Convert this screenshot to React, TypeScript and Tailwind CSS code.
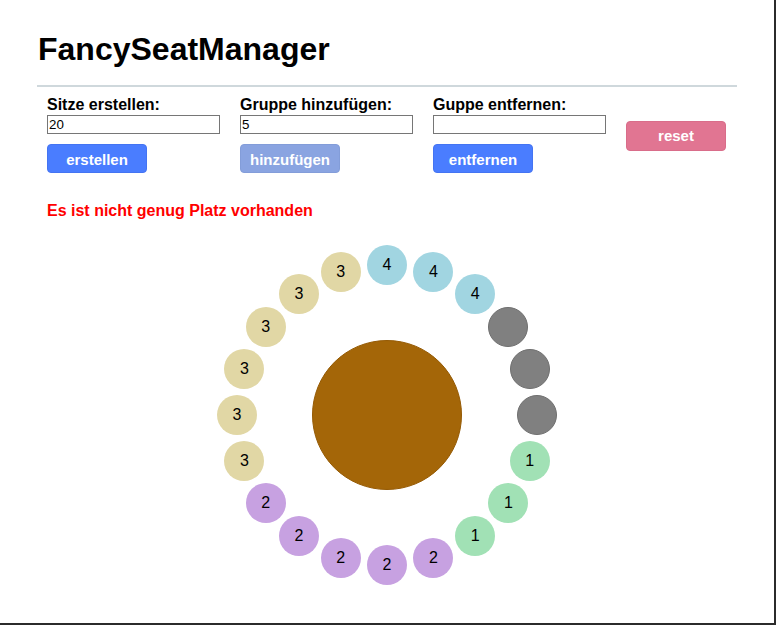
import React from 'react';

type Seat = { group: number | null };

// seats clockwise, starting at the top
const seatGroups: (number | null)[] = [4, 4, 4, null, null, null, 1, 1, 1, 2, 2, 2, 2, 2, 3, 3, 3, 3, 3, 3];

const seatColor = (g: number | null) => {
  switch (g) {
    case 1: return 'bg-[#a1e1b5]';
    case 2: return 'bg-[#c7a1e1]';
    case 3: return 'bg-[#e1d7a5]';
    case 4: return 'bg-[#a1d5e1]';
    default: return 'bg-[#808080] border border-[#6f6f6f]';
  }
};

const Field: React.FC<{ label: string; value: string; button: string; muted?: boolean }> = ({ label, value, button, muted }) => (
  <div className="flex flex-col w-[193px]">
    <label className="text-[16px] font-bold leading-[18px] text-black">{label}</label>
    <input
      defaultValue={value}
      className="mt-[1px] h-[19px] w-[173px] border border-[#767676] bg-white px-[1px] text-[13.33px] leading-[17px] text-black outline-none"
    />
    <button
      className={`mt-[10px] h-[29px] w-[100px] rounded-[4px] border pt-[3px] text-[15px] font-bold text-white ${muted ? 'bg-[#8aa4e1] border-[#839dd9]' : 'bg-[#4a7dff] border-[#4474f2]'}`}
    >
      {button}
    </button>
  </div>
);

const App: React.FC = () => {
  const seats: Seat[] = seatGroups.map(group => ({ group }));
  const R = 150;
  const C = 170;

  return (
    <div className="w-[776px] h-[625px] bg-white border-r-2 border-b-2 border-[#2b2b2b] overflow-hidden font-['Liberation_Sans',Arial,sans-serif] text-black">
      <h1 className="pt-[31px] pl-[38px] text-[32px] font-bold leading-[37px]">FancySeatManager</h1>
      <div className="mt-[17px] ml-[37px] w-[700px] h-[2px] bg-[#cfd8dc]" />

      <div className="mt-[9px] pl-[47px] flex">
        <Field label="Sitze erstellen:" value="20" button="erstellen" />
        <Field label="Gruppe hinzufügen:" value="5" button="hinzufügen" muted />
        <Field label="Guppe entfernen:" value="" button="entfernen" />
        <div className="pt-[25px]">
          <button className="h-[30px] w-[100px] rounded-[4px] border border-[#d96d8a] bg-[#e17592] text-[15px] font-bold text-white">reset</button>
        </div>
      </div>

      <p className="mt-[29px] pl-[47px] text-[16px] font-bold leading-[18px] text-[#ff0000]">Es ist nicht genug Platz vorhanden</p>

      <div className="relative mx-auto mt-[25px] w-[340px] h-[340px]">
        <div className="absolute left-[95px] top-[95px] w-[150px] h-[150px] rounded-full bg-[#a46608] border border-[#955a04]" />
        {seats.map((s, i) => {
          const a = (i * 2 * Math.PI) / seats.length;
          const x = C + R * Math.sin(a) - 20;
          const y = C - R * Math.cos(a) - 20;
          return (
            <div
              key={i}
              className={`absolute w-[40px] h-[40px] rounded-full flex items-center justify-center text-[16px] text-black ${seatColor(s.group)}`}
              style={{ left: x, top: y }}
            >
              {s.group ?? ''}
            </div>
          );
        })}
      </div>
    </div>
  );
};

export default App;
